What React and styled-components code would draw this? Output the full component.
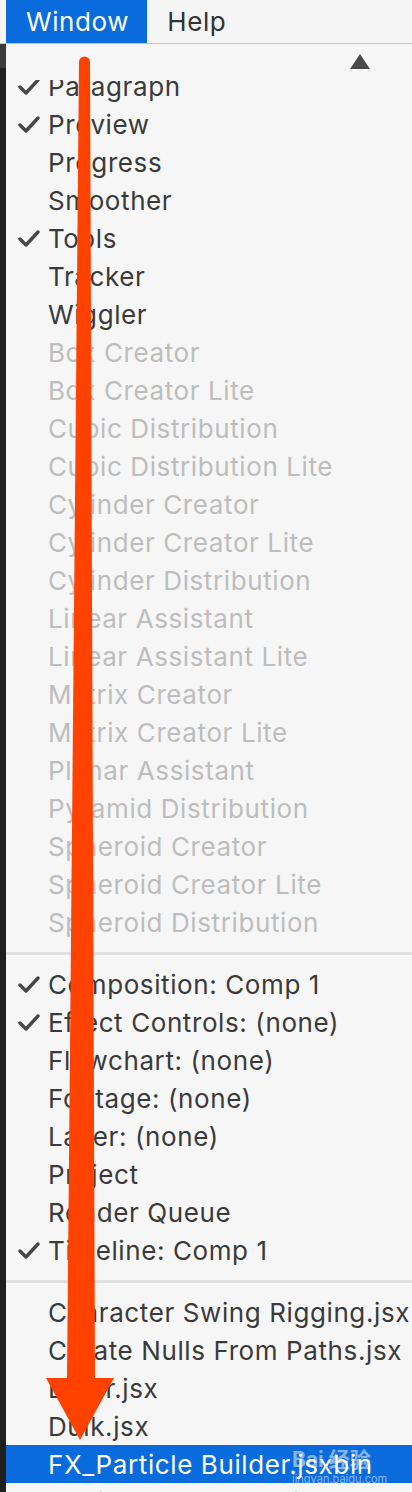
import React from 'react';
import styled, { createGlobalStyle } from 'styled-components';

const GlobalStyle = createGlobalStyle`
  html, body {
    margin: 0;
    padding: 0;
    background: #1e1e1e;
  }
  #root {
    width: 412px;
    height: 1492px;
    overflow: hidden;
  }
`;

const StyledPage = styled.div`
  position: relative;
  width: 412px;
  height: 1492px;
  display: flex;
  flex-direction: column;
  font-family: Inter, "Noto Sans", sans-serif;
  overflow: hidden;
`;

const StyledMenuBar = styled.div`
  display: flex;
  align-items: stretch;
  height: 43px;
  padding-left: 6px;
  background: #f5f5f5;
  border-bottom: 1px solid #c6c6c6;
  flex-shrink: 0;
`;

const StyledMenuTitle = styled.div`
  display: flex;
  align-items: center;
  padding: 0 18px 0 20px;
  font-size: 26px;
  letter-spacing: 0.6px;
  color: ${({ active }) => (active ? '#ffffff' : '#333333')};
  background: ${({ active }) => (active ? '#0a6bdc' : 'transparent')};
`;

const StyledBody = styled.div`
  flex: 1;
  display: flex;
  min-height: 0;
`;

const StyledStrip = styled.div`
  width: 6px;
  flex-shrink: 0;
  background: #1f1f1f;
  border-top: 24px solid #3a3a3a;
`;

const StyledMenu = styled.div`
  flex: 1;
  display: flex;
  flex-direction: column;
  background: #f6f6f6;
  min-height: 0;
`;

const StyledScroller = styled.div`
  height: 36px;
  display: flex;
  justify-content: flex-end;
  align-items: flex-start;
  padding: 10px 42px 0 0;
  box-sizing: border-box;
  flex-shrink: 0;
  background: #f6f6f6;
`;

const StyledTriangle = styled.div`
  width: 0;
  height: 0;
  border-left: 10px solid transparent;
  border-right: 10px solid transparent;
  border-bottom: 15px solid #4a4a4a;
`;

const StyledList = styled.div`
  flex: 1;
  overflow: hidden;
  & > :first-child {
    margin-top: -13px;
  }
`;

const StyledItem = styled.div`
  position: relative;
  height: 38px;
  display: flex;
  align-items: center;
  padding-left: 42px;
  font-size: 26px;
  letter-spacing: 0.6px;
  white-space: nowrap;
  color: ${({ disabled, selected }) =>
    selected ? '#ffffff' : disabled ? '#bdbdbd' : '#3a3a3a'};
  background: ${({ selected }) => (selected ? '#0a6bdc' : 'transparent')};
`;

const StyledCheck = styled.svg`
  position: absolute;
  left: 12px;
  top: 11px;
  width: 22px;
  height: 18px;
`;

const StyledSeparator = styled.div`
  height: 24px;
  display: flex;
  align-items: center;
  &::after {
    content: '';
    flex: 1;
    height: 3px;
    background: #e0e0e0;
  }
`;

const StyledArrow = styled.svg`
  position: absolute;
  left: 0;
  top: 0;
  width: 412px;
  height: 1492px;
  pointer-events: none;
`;

const StyledWatermark = styled.div`
  position: absolute;
  left: 292px;
  top: 1449px;
  display: flex;
  flex-direction: column;
  align-items: flex-start;
  color: rgba(255, 255, 255, 0.5);
  font-family: Inter, "Noto Sans CJK SC", sans-serif;
  line-height: 1;
  & > span:first-child {
    font-size: 21px;
    font-weight: 700;
  }
  & > span:last-child {
    font-size: 11px;
    margin-top: 4px;
  }
`;

const groups = [
  [
    { label: 'Paragraph', checked: true },
    { label: 'Preview', checked: true },
    { label: 'Progress' },
    { label: 'Smoother' },
    { label: 'Tools', checked: true },
    { label: 'Tracker' },
    { label: 'Wiggler' },
    { label: 'Box Creator', disabled: true },
    { label: 'Box Creator Lite', disabled: true },
    { label: 'Cubic Distribution', disabled: true },
    { label: 'Cubic Distribution Lite', disabled: true },
    { label: 'Cylinder Creator', disabled: true },
    { label: 'Cylinder Creator Lite', disabled: true },
    { label: 'Cylinder Distribution', disabled: true },
    { label: 'Linear Assistant', disabled: true },
    { label: 'Linear Assistant Lite', disabled: true },
    { label: 'Matrix Creator', disabled: true },
    { label: 'Matrix Creator Lite', disabled: true },
    { label: 'Planar Assistant', disabled: true },
    { label: 'Pyramid Distribution', disabled: true },
    { label: 'Spheroid Creator', disabled: true },
    { label: 'Spheroid Creator Lite', disabled: true },
    { label: 'Spheroid Distribution', disabled: true },
  ],
  [
    { label: 'Composition: Comp 1', checked: true },
    { label: 'Effect Controls: (none)', checked: true },
    { label: 'Flowchart: (none)' },
    { label: 'Footage: (none)' },
    { label: 'Layer: (none)' },
    { label: 'Project' },
    { label: 'Render Queue' },
    { label: 'Timeline: Comp 1', checked: true },
  ],
  [
    { label: 'Character Swing Rigging.jsx' },
    { label: 'Create Nulls From Paths.jsx' },
    { label: 'Dicer.jsx' },
    { label: 'Duik.jsx' },
    { label: 'FX_Particle Builder.jsxbin', selected: true },
    { label: 'Motion v2 Installer.jsx' },
  ],
];

const Check = () => (
  <StyledCheck viewBox="0 0 22 18">
    <polyline
      points="2,9 8,15 20,2"
      fill="none"
      stroke="#474747"
      strokeWidth="3.4"
      strokeLinecap="round"
      strokeLinejoin="round"
    />
  </StyledCheck>
);

const App = () => {
  return (
    <StyledPage>
      <GlobalStyle />
      <StyledMenuBar>
        <StyledMenuTitle active>Window</StyledMenuTitle>
        <StyledMenuTitle>Help</StyledMenuTitle>
      </StyledMenuBar>
      <StyledBody>
        <StyledStrip />
        <StyledMenu>
          <StyledScroller>
            <StyledTriangle />
          </StyledScroller>
          <StyledList>
            {groups.map((group, gi) => (
              <React.Fragment key={gi}>
                {gi > 0 && <StyledSeparator />}
                {group.map((item) => (
                  <StyledItem
                    key={item.label}
                    disabled={item.disabled}
                    selected={item.selected}
                  >
                    {item.checked && <Check />}
                    {item.label}
                  </StyledItem>
                ))}
              </React.Fragment>
            ))}
          </StyledList>
        </StyledMenu>
      </StyledBody>
      <StyledWatermark>
        <span>Bai 经验</span>
        <span>jingyan.baidu.com</span>
      </StyledWatermark>
      <StyledArrow viewBox="0 0 412 1492">
        <circle cx="84.5" cy="62" r="5.5" fill="#ff4200" />
        <polygon points="79,62 90,62 95,1380 67,1380" fill="#ff4200" />
        <polygon points="46,1378 114,1378 80,1440" fill="#ff4200" />
      </StyledArrow>
    </StyledPage>
  );
};

export default App;
